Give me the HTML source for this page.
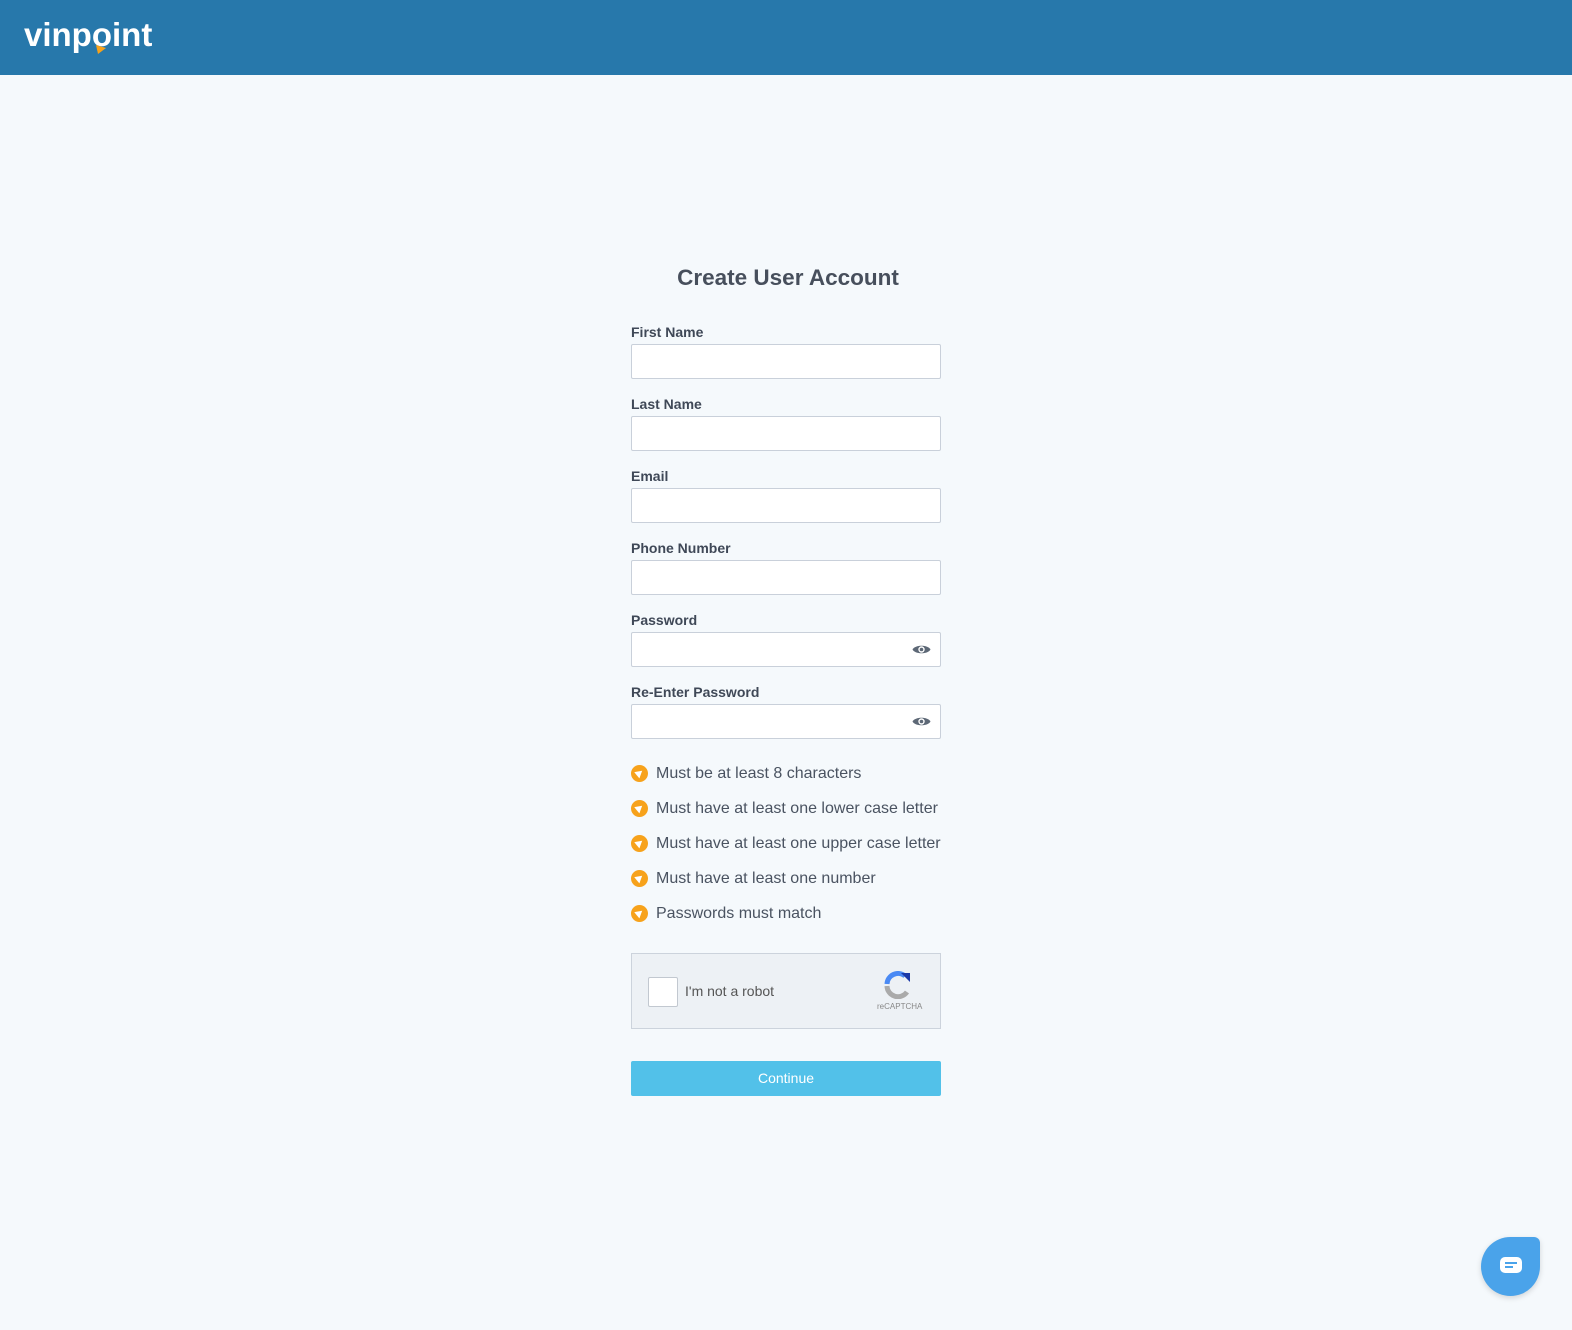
<!DOCTYPE html>
<html><head><meta charset="utf-8"><style>
*{box-sizing:border-box;margin:0;padding:0}
body{width:1572px;height:1330px;background:#f5f9fc;font-family:"Liberation Sans",sans-serif;color:#464f5d;position:relative;overflow:hidden}
.hdr{position:absolute;left:0;top:0;width:1572px;height:75px;background:#2778ab}
.logo{position:absolute;left:24px;top:16px;color:#fff;font-weight:bold;font-size:33px;letter-spacing:0}
h1{position:absolute;left:4px;width:1568px;top:265px;text-align:center;font-size:22.5px;font-weight:bold;color:#474f5c}
.lbl{position:absolute;left:631px;font-size:14px;font-weight:bold;color:#3f4857}
.inp{position:absolute;left:631px;width:310px;height:35px;background:#fff;border:1px solid #c9d0da;border-radius:2px}
.eye{position:absolute;right:9px;top:10px}
.chk{position:absolute;left:631px;font-size:16px;color:#4a5361}
.chk i{position:absolute;left:0;top:0;width:17px;height:17px;border-radius:50%;background:#f7a21b}
.chk i:after{content:"";position:absolute;left:5px;top:4px;width:0;height:0;border-left:7px solid #fff;border-top:4px solid transparent;border-bottom:4px solid transparent;transform:rotate(-40deg)}
.chk span{position:absolute;left:25px;top:0;white-space:nowrap}
.cap{position:absolute;left:631px;width:310px;height:76px;background:#edf1f5;border:1px solid #ccd3dc}
.box{position:absolute;left:16px;top:23px;width:30px;height:30px;background:#fff;border:1px solid #c2c8d0;border-radius:2px}
.btn{position:absolute;left:631px;width:310px;height:35px;background:#52c1e9;color:#fff;font-size:14px;text-align:center;line-height:35px;border-radius:2px}
.chat{position:absolute;width:59px;height:59px;background:#4aa3ea;border-radius:50% 6px 50% 50%;box-shadow:0 2px 6px rgba(0,0,0,.15)}
</style></head><body>
<div class="hdr"><div class="logo">vinpoint</div>
<svg style="position:absolute;left:95px;top:45px" width="12" height="10"><path d="M1 0L11 3L3 9Z" fill="#f7a21b"/></svg></div>
<h1>Create User Account</h1>
<div class="lbl" style="top:324px">First Name</div><div class="inp" style="top:344px"></div>
<div class="lbl" style="top:396px">Last Name</div><div class="inp" style="top:416px"></div>
<div class="lbl" style="top:468px">Email</div><div class="inp" style="top:488px"></div>
<div class="lbl" style="top:540px">Phone Number</div><div class="inp" style="top:560px"></div>
<div class="lbl" style="top:612px">Password</div><div class="inp" style="top:632px"><svg class="eye" width="19" height="13" viewBox="0 0 19 13"><path d="M0.5 6.5C3 1.5 16 1.5 18.5 6.5C16 11.5 3 11.5 0.5 6.5Z" fill="#5d6876"/><circle cx="9.5" cy="6.5" r="3.2" fill="#fff"/><circle cx="9.5" cy="6.5" r="1.8" fill="#5d6876"/></svg></div>
<div class="lbl" style="top:684px">Re-Enter Password</div><div class="inp" style="top:704px"><svg class="eye" width="19" height="13" viewBox="0 0 19 13"><path d="M0.5 6.5C3 1.5 16 1.5 18.5 6.5C16 11.5 3 11.5 0.5 6.5Z" fill="#5d6876"/><circle cx="9.5" cy="6.5" r="3.2" fill="#fff"/><circle cx="9.5" cy="6.5" r="1.8" fill="#5d6876"/></svg></div>
<div class="chk" style="top:765px"><i></i><span>Must be at least 8 characters</span></div>
<div class="chk" style="top:800px"><i></i><span>Must have at least one lower case letter</span></div>
<div class="chk" style="top:835px"><i></i><span>Must have at least one upper case letter</span></div>
<div class="chk" style="top:870px"><i></i><span>Must have at least one number</span></div>
<div class="chk" style="top:905px"><i></i><span>Passwords must match</span></div>
<div class="cap" style="top:953px"><div class="box"></div><div style="position:absolute;left:53px;top:29px;font-size:14px;color:#555">I'm not a robot</div>
<svg style="position:absolute;left:251px;top:17px" width="30" height="28" viewBox="0 0 30 28"><path d="M4 13A11 11 0 0 1 22 5" stroke="#4a8af4" stroke-width="5" fill="none"/><path d="M18 2L27 2L27 11Z" fill="#1c3aa9"/><path d="M4 15A11 11 0 0 0 24 21" stroke="#aaa" stroke-width="5" fill="none"/></svg>
<div style="position:absolute;left:245px;top:48px;font-size:8px;color:#888">reCAPTCHA</div></div>
<div class="btn" style="top:1061px">Continue</div>
<div class="chat" style="left:1481px;top:1237px"><svg style="position:absolute;left:19px;top:20px" width="22" height="16"><rect x="0" y="0" width="22" height="16" rx="5" fill="#fff"/><rect x="5" y="5" width="12" height="2" fill="#4aa3ea"/><rect x="5" y="9" width="8" height="2" fill="#4aa3ea"/></svg></div>
</body></html>
